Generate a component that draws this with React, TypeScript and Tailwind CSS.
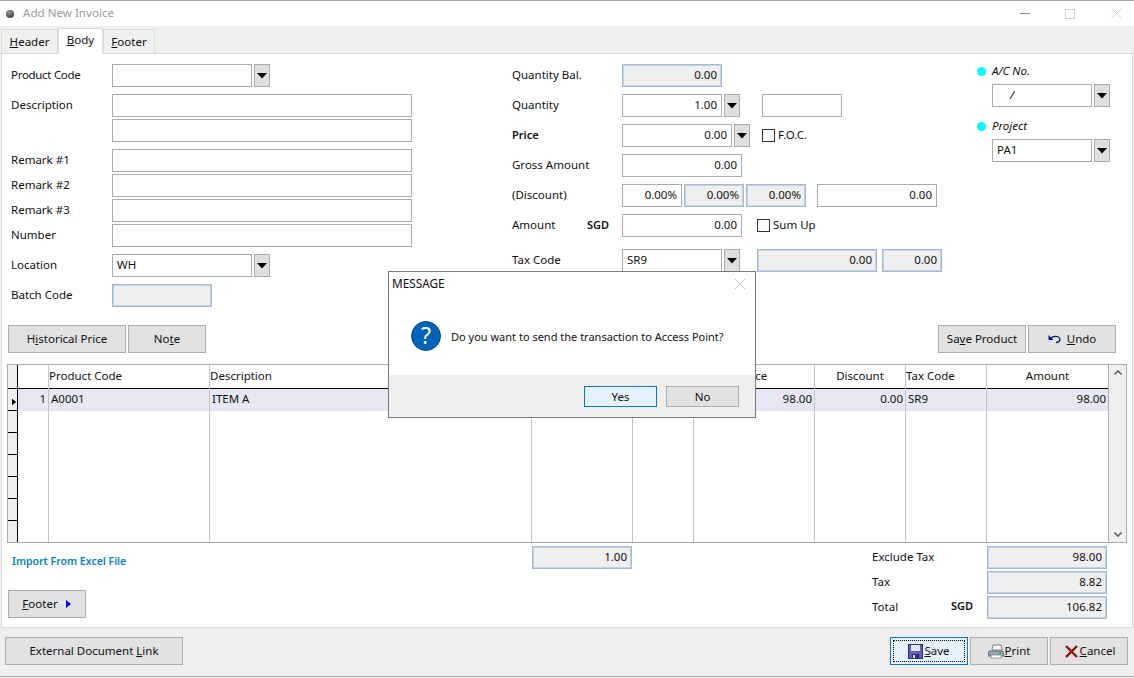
import React from 'react';
import clsx from 'clsx';

function Field({ w, value, right, off, className }: { w: string; value?: string; right?: boolean; off?: boolean; className?: string }) {
  return (
    <div
      className={clsx(
        'h-[23px] shrink-0 flex items-center px-1 pb-px border leading-none',
        w,
        right ? 'justify-end' : 'justify-start',
        off ? 'bg-[#efefef] border-[#a3bad3] shadow-[inset_0_0_0_1px_#c4d3e4]' : 'bg-white border-[#ababab]',
        className
      )}
    >
      {value}
    </div>
  );
}

function Drop() {
  return (
    <div className="ml-[2px] w-[16px] h-[23px] shrink-0 bg-[#dfdfdf] border border-[#ababab] flex items-center justify-center">
      <svg width="10" height="6" viewBox="0 0 10 6">
        <path d="M0 0h10L5 5.5z" fill="#000" />
      </svg>
    </div>
  );
}

function Check({ label, className }: { label: string; className?: string }) {
  return (
    <div className={clsx('flex items-center', className)}>
      <div className="w-[13px] h-[13px] border border-[#333] bg-white mr-[3px]" />
      <span className="-translate-y-px">{label}</span>
    </div>
  );
}

function Btn({ w, children, className }: { w: string; children: React.ReactNode; className?: string }) {
  return (
    <div className={clsx('h-[28px] shrink-0 flex items-center justify-center bg-[#e1e1e1] border border-[#adadad]', w, className)}>
      {children}
    </div>
  );
}

function Row({ label, top, bold, cur, labelW, labelClass, children }: { label: string; top: string; bold?: boolean; cur?: string; labelW?: string; labelClass?: string; children: React.ReactNode }) {
  return (
    <div className={clsx('flex items-center h-[23px]', top)}>
      <div className={clsx('shrink-0 flex justify-between pr-[13px]', labelW || 'w-[110px]', bold ? 'font-semibold text-[11px]' : '-translate-y-px', labelClass)}>
        <span>{label}</span>
        {cur && <span className="font-semibold text-[11px] translate-y-px">{cur}</span>}
      </div>
      {children}
    </div>
  );
}

const cols = [
  { w: 'w-[31px]', title: '', align: 'text-right', cell: '1' },
  { w: 'w-[161px]', title: 'Product Code', align: 'text-left', cell: 'A0001' },
  { w: 'w-[322px]', title: 'Description', align: 'text-left', cell: 'ITEM A' },
  { w: 'w-[101px]', title: '', align: 'text-center', cell: '' },
  { w: 'w-[61px]', title: '', align: 'text-center', cell: '' },
  { w: 'w-[121px]', title: 'Price', align: 'text-center', cell: '98.00' },
  { w: 'w-[91px]', title: 'Discount', align: 'text-center', cell: '0.00' },
  { w: 'w-[81px]', title: 'Tax Code', align: 'text-left', cell: 'SR9' },
  { w: 'w-[121px]', title: 'Amount', align: 'text-center', cell: '98.00' },
];

function InvoiceGrid() {
  return (
    <div className="mt-[11px] ml-[5px] w-[1120px] h-[179px] flex border border-[#ababab] bg-white">
      {/* row selector */}
      <div className="w-[10px] shrink-0 flex flex-col border-r border-black bg-[#efefef]">
        <div className="h-[24px] border-b border-black shrink-0" />
        <div className="h-[22px] border-b border-black shrink-0 flex items-center">
          <svg width="6" height="8" viewBox="0 0 6 8" className="ml-[4px] mt-[4px]">
            <path d="M0 0l5 4-5 4z" fill="#000" />
          </svg>
        </div>
        {[0, 1, 2, 3, 4].map(i => (
          <div key={i} className="h-[22px] shrink-0 border-b border-black" />
        ))}
        <div className="h-[21px] shrink-0" />
      </div>
      <div className="flex-1 flex">
        {cols.map((c, i) => (
          <div key={i} className={clsx('shrink-0 flex flex-col', c.w, i < 8 && 'border-r border-[#c4c4c4]')}>
            <div className={clsx('h-[24px] shrink-0 border-b border-black leading-[22px]', c.align)}>{c.title}</div>
            <div
              className={clsx(
                'h-[22px] shrink-0 bg-[#e6e7f1] leading-[20px] px-[2px]',
                i === 0 || i >= 3 ? (i === 7 ? 'text-left' : 'text-right') : 'text-left'
              )}
            >
              {c.cell}
            </div>
          </div>
        ))}
      </div>
      {/* scrollbar */}
      <div className="w-[18px] shrink-0 bg-[#efefef] flex flex-col justify-between items-center py-[4px] border-l border-[#ababab]">
        <svg width="10" height="7" viewBox="0 0 10 7">
          <path d="M1.5 5.5L5 2l3.5 3.5" stroke="#606060" strokeWidth="1.6" fill="none" />
        </svg>
        <svg width="10" height="7" viewBox="0 0 10 7">
          <path d="M1.5 1.5L5 5l3.5-3.5" stroke="#606060" strokeWidth="1.6" fill="none" />
        </svg>
      </div>
    </div>
  );
}

function MessageBox() {
  return (
    <div className="absolute left-[388px] top-[271px] w-[368px] h-[147px] bg-white border border-[#7a7a7a] flex flex-col">
      <div className="h-[24px] shrink-0 flex items-center justify-between pl-[3px] pr-[9px] text-[11.8px]">
        <span>MESSAGE</span>
        <svg width="12" height="12" viewBox="0 0 12 12">
          <path d="M1 1l10 10M11 1L1 11" stroke="#c4c4c4" strokeWidth="1" />
        </svg>
      </div>
      <div className="flex-1 flex items-center pl-[22px]">
        <div className="w-[30px] h-[30px] rounded-full bg-[#0063b8] border border-[#0a4f8c] flex items-center justify-center text-white text-[23px] leading-none">
          ?
        </div>
        <span className="ml-[10px] text-[11px] translate-y-[2px]">Do you want to send the transaction to Access Point?</span>
      </div>
      <div className="h-[42px] shrink-0 bg-[#efefef] flex items-start justify-end pt-[11px] pr-[16px] gap-[9px]">
        <div className="w-[73px] h-[21px] flex items-center justify-center bg-[#e5f1fb] border border-[#0078d7]">Yes</div>
        <div className="w-[73px] h-[21px] flex items-center justify-center bg-[#e1e1e1] border border-[#adadad]">No</div>
      </div>
    </div>
  );
}

export default function App() {
  return (
    <div className="relative w-[1134px] h-[678px] overflow-hidden bg-[#efefef] text-[#111] text-[11.5px] flex flex-col" style={{ fontFamily: '"Noto Sans", Tahoma, sans-serif' }}>
      {/* title bar */}
      <div className="h-[26px] shrink-0 bg-white border-t border-[#a9a9a9] flex items-center pl-[6px]">
        <div className="w-[8px] h-[8px] rounded-full bg-[radial-gradient(circle_at_40%_30%,#999,#222)]" />
        <span className="ml-[9px] text-[#9b9b9b] text-[11.6px] -translate-y-px">Add New Invoice</span>
        <div className="ml-auto flex items-center">
          <div className="w-[10px] h-px bg-[#8a8a8a]" />
          <div className="ml-[35px] w-[10px] h-[10px] border border-[#d0d0d0]" />
          <svg width="11" height="11" viewBox="0 0 11 11" className="ml-[36px] mr-[12px]">
            <path d="M0.5 0.5l10 10M10.5 0.5l-10 10" stroke="#d4d4d4" strokeWidth="1" />
          </svg>
        </div>
      </div>

      {/* tabs */}
      <div className="h-[28px] shrink-0 flex items-end pl-[1px] border-b border-[#dcdcdc]">
        <div className="w-[57px] h-[24px] bg-[#efefef] border border-b-0 border-[#dcdcdc] flex items-center justify-center">
          <span><u>H</u>eader</span>
        </div>
        <div className="w-[45px] h-[26px] -mb-px bg-white border border-b-0 border-[#dcdcdc] flex items-center justify-center pb-[3px]">
          <span><u>B</u>ody</span>
        </div>
        <div className="w-[52px] h-[24px] bg-[#efefef] border border-b-0 border-[#dcdcdc] flex items-center justify-center">
          <span><u>F</u>ooter</span>
        </div>
      </div>

      {/* panel */}
      <div className="h-[574px] shrink-0 ml-px mr-px bg-white border-x border-b border-[#dcdcdc] flex flex-col">
        <div className="h-[271px] shrink-0 flex pt-[10px]">
          {/* left column */}
          <div className="w-[510px] shrink-0 pl-[9px]">
            <Row label="Product Code" labelW="w-[101px]" labelClass="tracking-[-0.3px]" top=""><Field w="w-[140px]" /><Drop /></Row>
            <Row label="Description" labelW="w-[101px]" top="mt-[7px]"><Field w="w-[300px]" /></Row>
            <Row label="" labelW="w-[101px]" top="mt-[2px]"><Field w="w-[300px]" /></Row>
            <Row label="Remark #1" labelW="w-[101px]" top="mt-[7px]"><Field w="w-[300px]" /></Row>
            <Row label="Remark #2" labelW="w-[101px]" top="mt-[2px]"><Field w="w-[300px]" /></Row>
            <Row label="Remark #3" labelW="w-[101px]" top="mt-[2px]"><Field w="w-[300px]" /></Row>
            <Row label="Number" labelW="w-[101px]" top="mt-[2px]"><Field w="w-[300px]" /></Row>
            <Row label="Location" labelW="w-[101px]" top="mt-[7px]"><Field w="w-[140px]" value="WH" /><Drop /></Row>
            <Row label="Batch Code" labelW="w-[101px]" top="mt-[7px]"><Field w="w-[100px]" off /></Row>
          </div>
          {/* middle column */}
          <div className="w-[462px] shrink-0">
            <Row label="Quantity Bal." top=""><Field w="w-[100px]" value="0.00" right off /></Row>
            <Row label="Quantity" top="mt-[7px]">
              <Field w="w-[100px]" value="1.00" right /><Drop /><Field w="w-[80px]" className="ml-[22px]" />
            </Row>
            <Row label="Price" bold top="mt-[7px]">
              <Field w="w-[110px]" value="0.00" right /><Drop /><Check label="F.O.C." className="ml-[12px]" />
            </Row>
            <Row label="Gross Amount" top="mt-[7px]"><Field w="w-[120px]" value="0.00" right /></Row>
            <Row label="(Discount)" labelClass="-translate-y-[2px]" top="mt-[7px]">
              <Field w="w-[60px]" value="0.00%" right />
              <Field w="w-[60px]" value="0.00%" right off className="ml-[2px]" />
              <Field w="w-[60px]" value="0.00%" right off className="ml-[2px]" />
              <Field w="w-[120px]" value="0.00" right className="ml-[11px]" />
            </Row>
            <Row label="Amount" cur="SGD" top="mt-[7px]">
              <Field w="w-[120px]" value="0.00" right /><Check label="Sum Up" className="ml-[15px]" />
            </Row>
            <Row label="Tax Code" top="mt-[12px]">
              <Field w="w-[100px]" value="SR9" /><Drop />
              <Field w="w-[120px]" value="0.00" right off className="ml-[17px]" />
              <Field w="w-[60px]" value="0.00" right off className="ml-[5px]" />
            </Row>
          </div>
          {/* right column */}
          <div className="flex-1 italic">
            <div className="flex items-center h-[14px]">
              <div className="w-[9px] h-[9px] rounded-full bg-[#00ffff] ml-[3px] mr-[6px]" />A/C No.
            </div>
            <div className="flex ml-[18px] mt-[6px] not-italic">
              <Field w="w-[100px]" value="/" className="italic pl-[17px]" /><Drop />
            </div>
            <div className="flex items-center h-[14px] mt-[12px]">
              <div className="w-[9px] h-[9px] rounded-full bg-[#00ffff] ml-[3px] mr-[6px]" />Project
            </div>
            <div className="flex ml-[18px] mt-[6px] not-italic">
              <Field w="w-[100px]" value="PA1" /><Drop />
            </div>
          </div>
        </div>

        {/* action buttons */}
        <div className="flex pl-[6px] pr-[16px] h-[28px] shrink-0 gap-[2px]">
          <Btn w="w-[118px]"><span>H<u>i</u>storical Price</span></Btn>
          <Btn w="w-[78px]"><span>No<u>t</u>e</span></Btn>
          <Btn w="w-[88px]" className="ml-auto"><span>Sa<u>v</u>e Product</span></Btn>
          <Btn w="w-[88px]">
            <svg width="14" height="10" viewBox="0 0 14 10" className="mr-[5px]">
              <path d="M0.5 1v5h5z" fill="#0b1a6b" />
              <path d="M3 4c2-2 7-2.5 8.5 0s-1 4.5-3.5 4.5" stroke="#0b1a6b" strokeWidth="1.3" fill="none" />
            </svg>
            <span><u>U</u>ndo</span>
          </Btn>
        </div>

        <InvoiceGrid />

        {/* totals */}
        <div className="flex flex-1 mt-[3px]">
          <div className="w-[530px] shrink-0 pl-[10px] flex flex-col">
            <div className="mt-[7px] h-[16px] text-[#0a7fc4] font-semibold text-[10.5px] leading-[16px]">Import From Excel File</div>
            <Btn w="w-[78px]" className="mt-[21px] -ml-[4px]">
              <span><u>F</u>ooter</span>
              <svg width="6" height="8" viewBox="0 0 6 8" className="ml-[8px]">
                <path d="M0 0l5 4-5 4z" fill="#0000e0" />
              </svg>
            </Btn>
          </div>
          <Field w="w-[100px]" value="1.00" right off />
          <div className="ml-[240px] w-[235px] flex flex-col gap-[2px]">
            {[
              ['Exclude Tax', '', '98.00'],
              ['Tax', '', '8.82'],
              ['Total', 'SGD', '106.82'],
            ].map(r => (
              <div key={r[0]} className="flex items-center justify-between">
                <div className="w-[101px] flex justify-between -translate-y-px">
                  <span>{r[0]}</span>
                  <span className="font-semibold text-[11px]">{r[1]}</span>
                </div>
                <Field w="w-[120px]" value={r[2]} right off />
              </div>
            ))}
          </div>
        </div>
      </div>

      {/* footer bar */}
      <div className="h-[49px] shrink-0 flex items-start pt-[9px] pl-[5px] pr-[6px] gap-[2px] border-b border-[#a9a9a9]">
        <Btn w="w-[178px]"><span>External Document <u>L</u>ink</span></Btn>
        <div className="ml-auto w-[78px] h-[28px] bg-[#e5f1fb] border border-[#0078d7] p-[2px]">
          <div className="w-full h-full border border-dotted border-black flex items-center justify-center">
            <svg width="15" height="15" viewBox="0 0 15 15" className="mr-[1px]">
              <rect x="0.5" y="0.5" width="14" height="14" fill="#5a5fc0" stroke="#2b2e78" />
              <rect x="3" y="1" width="9" height="6" fill="#e4e7fa" />
              <rect x="4" y="10" width="7" height="4.5" fill="#2b2e78" />
              <rect x="5" y="11" width="2" height="3" fill="#e4e7fa" />
            </svg>
            <span><u>S</u>ave</span>
          </div>
        </div>
        <Btn w="w-[78px]">
          <svg width="17" height="15" viewBox="0 0 17 15">
            <path d="M5 1h8l1 5H4z" fill="#fafafa" stroke="#5f6a78" strokeWidth="0.8" />
            <path d="M1 7h14l1 5H0z" fill="#9aa6b4" stroke="#4f5a68" strokeWidth="0.8" />
            <rect x="3" y="11" width="10" height="3" fill="#ffffff" stroke="#5f6a78" strokeWidth="0.6" />
            <rect x="11" y="8" width="2" height="2" fill="#22c04a" />
          </svg>
          <span><u>P</u>rint</span>
        </Btn>
        <Btn w="w-[78px]">
          <svg width="13" height="13" viewBox="0 0 13 13" className="mr-[2px] ml-[2px]">
            <path d="M1 1l11 11M12 1L1 12" stroke="#8c1414" strokeWidth="2.4" />
          </svg>
          <span><u>C</u>ancel</span>
        </Btn>
      </div>

      <MessageBox />
    </div>
  );
}
